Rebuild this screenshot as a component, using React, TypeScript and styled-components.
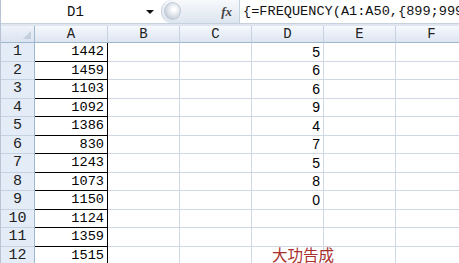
import React from "react";
import styled, { createGlobalStyle } from "styled-components";

const Global = createGlobalStyle`
  html, body { margin: 0; padding: 0; background: #fff; overflow: hidden; }
  #root { width: 459px; height: 263px; overflow: hidden; }
`;

const Page = styled.div`
  width: 459px;
  height: 263px;
  display: flex;
  flex-direction: column;
  border-left: 1px solid #b8c4d4;
  box-sizing: border-box;
  overflow: hidden;
  background: #fff;
`;

const FormulaBar = styled.div`
  height: 24px;
  flex: none;
  display: flex;
  align-items: stretch;
  background: #fff;
  border-bottom: 1px solid #c6d1de;
  box-sizing: border-box;
`;

const NameBox = styled.div`
  width: 160px;
  flex: none;
  display: flex;
  align-items: center;
  font-family: "Liberation Mono", monospace;
  font-size: 14px;
  color: #111;
`;

const NameText = styled.span`
  flex: 1;
  text-align: center;
  padding-left: 4px;
`;

const DropArrow = styled.span`
  width: 0;
  height: 0;
  border-left: 4px solid transparent;
  border-right: 4px solid transparent;
  border-top: 4px solid #111;
  margin-right: 7px;
`;

const Grip = styled.div`
  width: 78px;
  flex: none;
  display: flex;
  align-items: center;
  justify-content: flex-end;
  background: linear-gradient(#f7f9fc, #dde5ef);
  border-left: 1px solid #c8d2de;
  border-radius: 11px 0 0 11px;
  position: relative;
  padding-right: 7px;
  box-sizing: border-box;
`;

const Knob = styled.div`
  position: absolute;
  left: 2px;
  top: 2px;
  width: 17px;
  height: 18px;
  border-radius: 50%;
  background: radial-gradient(circle at 60% 40%, #ffffff 10%, #d7dde5 55%, #aab5c2 100%);
  border: 1px solid #c0cad6;
  box-sizing: border-box;
`;

const Fx = styled.span`
  font-family: "Liberation Serif", serif;
  font-style: italic;
  font-weight: bold;
  font-size: 13px;
  color: #444;
`;

const FormulaText = styled.div`
  flex: 1;
  display: flex;
  align-items: center;
  padding-left: 3px;
  border-left: 1px solid #c6d1de;
  font-family: "Liberation Mono", monospace;
  font-size: 13.6px;
  color: #111;
  white-space: nowrap;
  overflow: hidden;
`;

const Strip = styled.div`
  height: 2px;
  flex: none;
  background: #dfe6ef;
`;

const Grid = styled.div`
  display: grid;
  grid-template-columns: 34px 73px 72px 72px 72px 72px 72px;
  grid-template-rows: 17px repeat(12, 18.5px);
`;

const Corner = styled.div`
  background: linear-gradient(#eef3fa, #dbe4f1);
  border-right: 1px solid #9eb6ce;
  border-bottom: 1px solid #9eb6ce;
  position: relative;
  box-sizing: border-box;
  &::after {
    content: "";
    position: absolute;
    right: 3px;
    bottom: 3px;
    width: 0;
    height: 0;
    border-left: 8px solid transparent;
    border-bottom: 8px solid #c3cfdd;
  }
`;

const ColHead = styled.div`
  background: linear-gradient(#f6f9fd 0%, #e8eef7 55%, #dde5f1 100%);
  border-right: 1px solid #c5d2e1;
  border-bottom: 1px solid #9eb6ce;
  box-sizing: border-box;
  display: flex;
  align-items: center;
  justify-content: center;
  font-family: "Liberation Mono", monospace;
  font-size: 14px;
  color: #222;
`;

const RowHead = styled.div`
  background: #e4ecf7;
  border-right: 1px solid #9eb6ce;
  border-bottom: 1px solid #c5d2e1;
  box-sizing: border-box;
  display: flex;
  align-items: center;
  justify-content: center;
  font-family: "Liberation Mono", monospace;
  font-size: 15px;
  color: #222;
`;

const Cell = styled.div<{ $boxed?: boolean; $mono?: boolean }>`
  border-right: 1px solid ${(p) => (p.$boxed ? "#000" : "#d0d7e5")};
  border-bottom: 1px solid ${(p) => (p.$boxed ? "#000" : "#d0d7e5")};
  box-sizing: border-box;
  display: flex;
  align-items: center;
  justify-content: flex-end;
  padding-right: 3px;
  font-family: ${(p) =>
    p.$mono ? '"Liberation Mono", monospace' : '"Liberation Sans", Arial, sans-serif'};
  font-size: ${(p) => (p.$mono ? "13.6px" : "14px")};
  color: #000;
  white-space: nowrap;
  position: relative;
`;

const RedNote = styled.span`
  position: absolute;
  left: 20px;
  top: -2px;
  font-family: "Noto Sans CJK SC", sans-serif;
  font-size: 15.5px;
  color: #a8302c;
  line-height: 18px;
`;

const colA = [1442, 1459, 1103, 1092, 1386, 830, 1243, 1073, 1150, 1124, 1359, 1515];
const colD = [5, 6, 6, 9, 4, 7, 5, 8, 0, "", "", ""];
const cols = ["A", "B", "C", "D", "E", "F"];

export default function App() {
  return (
    <>
      <Global />
      <Page>
        <FormulaBar>
          <NameBox>
            <NameText>D1</NameText>
            <DropArrow />
          </NameBox>
          <Grip>
            <Knob />
            <Fx>fx</Fx>
          </Grip>
          <FormulaText>{"{=FREQUENCY(A1:A50,{899;999;1099;1199;1299;1399;1499;1599})}"}</FormulaText>
        </FormulaBar>
        <Strip />
        <Grid>
          <Corner />
          {cols.map((c) => (
            <ColHead key={c}>{c}</ColHead>
          ))}
          {colA.map((a, i) => (
            <React.Fragment key={i}>
              <RowHead>{i + 1}</RowHead>
              <Cell $boxed $mono>{a}</Cell>
              <Cell />
              <Cell />
              <Cell>
                {colD[i]}
                {i === 11 && <RedNote>大功告成</RedNote>}
              </Cell>
              <Cell />
              <Cell />
            </React.Fragment>
          ))}
        </Grid>
      </Page>
    </>
  );
}
